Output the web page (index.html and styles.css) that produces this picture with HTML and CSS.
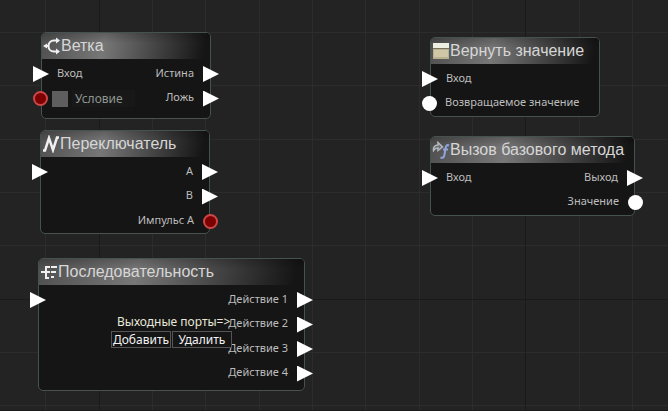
FILE: index.html
```html
<!DOCTYPE html>
<html lang="ru">
<head>
<meta charset="utf-8">
<title>Граф</title>
<link rel="stylesheet" href="styles.css">
</head>
<body>
<main class="canvas">
  <article class="node node-branch">
    <header class="head">
      <svg class="icon" viewBox="0 0 18 18"><path class="line" d="M2 9h3M14 3.500h-3C7.500 3.500 5.500 6 5.500 9s2 5.500 5.500 5.500h3"/><path class="solid" d="M13 .500l4 3-4 3zM13 11.500l4 3-4 3zM0 9l4-2.500v5z"/></svg>
      <h2>Ветка</h2>
    </header>
    <div class="body">
      <div class="ports">
        <div class="port"><i class="exec"></i><span>Вход</span></div>
        <div class="port port-field"><i class="data red"></i><input type="checkbox" id="condition"><label for="condition">Условие</label></div>
      </div>
      <div class="ports out">
        <div class="port"><span>Истина</span><i class="exec"></i></div>
        <div class="port"><span>Ложь</span><i class="exec"></i></div>
      </div>
    </div>
  </article>

  <article class="node node-switch">
    <header class="head">
      <svg class="icon" viewBox="0 0 18 18"><path class="bold" d="M1 15.500h2L7 3l4 12 4-12.500h2"/></svg>
      <h2>Переключатель</h2>
    </header>
    <div class="body">
      <div class="ports">
        <div class="port"><i class="exec"></i></div>
      </div>
      <div class="ports out">
        <div class="port"><span>A</span><i class="exec"></i></div>
        <div class="port"><span>B</span><i class="exec"></i></div>
        <div class="port"><span>Импульс A</span><i class="data red"></i></div>
      </div>
    </div>
  </article>

  <article class="node node-sequence">
    <header class="head">
      <svg class="icon" viewBox="0 0 18 18"><path class="line" d="M1 9h9M11 9h5M6 3v12h3M6 4h4M11 4h6M11 14h3"/></svg>
      <h2>Последовательность</h2>
    </header>
    <div class="body">
      <div class="ports">
        <div class="port"><i class="exec"></i></div>
      </div>
      <div class="ports out">
        <div class="port"><span>Действие 1</span><i class="exec"></i></div>
        <div class="port"><span>Действие 2</span><i class="exec"></i></div>
        <div class="port"><span>Действие 3</span><i class="exec"></i></div>
        <div class="port"><span>Действие 4</span><i class="exec"></i></div>
      </div>
    </div>
    <div class="tools">
      <p>Выходные порты=&gt;</p>
      <div class="buttons"><button type="button">Добавить</button><button type="button">Удалить</button></div>
    </div>
  </article>

  <article class="node node-return">
    <header class="head">
      <svg class="icon" viewBox="0 0 18 18"><path fill="#b9b08f" d="M1 1h16v16H1z"/><path fill="#eceee2" d="M1 1h16v5H1z"/><path fill="#77715c" d="M1 6h16v1H1z"/><path fill="#cfc7a6" d="M2 8h14v7H2z"/></svg>
      <h2>Вернуть значение</h2>
    </header>
    <div class="body">
      <div class="ports">
        <div class="port"><i class="exec"></i><span>Вход</span></div>
        <div class="port"><i class="data"></i><span>Возвращаемое значение</span></div>
      </div>
    </div>
  </article>

  <article class="node node-base">
    <header class="head">
      <svg class="icon" viewBox="0 0 18 18"><path fill="#6c7076" stroke="#b4b8be" stroke-width="1.500" d="M1.500 9.500C1 6 3 4 6 4V1.500L10.500 6 6 9.500V7C4 7 2.500 8 1.500 9.500z"/><path fill="none" stroke="#8fa5dc" stroke-width="2" d="M17 4.500c-2-1-3 0-3.500 3l-1 6c-.500 3-1.500 4-4 3M11 8.500h5"/></svg>
      <h2>Вызов базового метода</h2>
    </header>
    <div class="body">
      <div class="ports">
        <div class="port"><i class="exec"></i><span>Вход</span></div>
      </div>
      <div class="ports out">
        <div class="port"><span>Выход</span><i class="exec"></i></div>
        <div class="port"><span>Значение</span><i class="data"></i></div>
      </div>
    </div>
  </article>
</main>
</body>
</html>
```
FILE: styles.css
```css
* {
  box-sizing: border-box;
}

body {
  margin: 0;
  background: #232323;
  color: #bdbdbd;
  font: 11px/16px "Noto Sans", sans-serif;
}

h2,
p {
  margin: 0;
}

/* Fine grid lines repeat three to a tile; dark ones mark every eighth cell. */
.canvas {
  position: relative;
  min-height: 100vh;
  overflow: hidden;
  border-bottom: 1px solid #1e1a1b;
  background:
    linear-gradient(90deg, #1a1a1a 1px, transparent 1px) 99px 0 / 426px 100%,
    linear-gradient(#1a1a1a 1px, transparent 1px) 0 299px / 100% 426px,
    linear-gradient(90deg, #2c2c2c 1px, transparent 1px 54px, #2c2c2c 54px 55px, transparent 55px 107px, #2c2c2c 107px 108px, transparent 108px) 45px 0 / 160px 100%,
    linear-gradient(#2c2c2c 1px, transparent 1px 53px, #2c2c2c 53px 54px, transparent 54px 107px, #2c2c2c 107px 108px, transparent 108px) 0 32px / 100% 160px;
}

.node {
  position: absolute;
  border: 1px solid #46524f;
  border-radius: 5px;
  background: #151515;
}

.node-branch {
  left: 41px;
  top: 32px;
  width: 170px;
  padding-bottom: 7px;
}

.node-switch {
  left: 40px;
  top: 130px;
  width: 170px;
}

.node-sequence {
  left: 38px;
  top: 258px;
  width: 267px;
  padding-bottom: 4px;
}

.node-return {
  left: 430px;
  top: 37px;
  width: 170px;
}

.node-base {
  left: 430px;
  top: 136px;
  width: 205px;
}

.head {
  display: flex;
  align-items: center;
  height: 26px;
  padding-left: 1px;
  border-radius: 4px 4px 0 0;
  background:
    linear-gradient(rgba(0, 0, 0, 0.2), transparent 40%),
    linear-gradient(100deg, #505050, #777 37%, #484848 65%, #151515 96%);
}

.head h2 {
  color: #d6d6d6;
  font: 16px/20px "Liberation Sans", Arial, sans-serif;
  white-space: nowrap;
}

.icon {
  flex: none;
  width: 18px;
  height: 18px;
}

.line,
.bold {
  fill: none;
  stroke: #f0f0f0;
  stroke-width: 2;
}

.bold {
  stroke-width: 2.5;
}

.solid {
  fill: #f0f0f0;
}

.body {
  display: flex;
  justify-content: space-between;
  margin: 0 -9px;
  padding-top: 3px;
}

.ports {
  display: grid;
  grid-auto-rows: 24px 25px;
}

.out {
  justify-items: end;
}

.port {
  display: flex;
  align-items: center;
  gap: 8px;
  white-space: nowrap;
}

.out .port {
  gap: 9px;
}

.port span {
  padding-bottom: 3px;
}

.exec {
  width: 16px;
  height: 16px;
  background: #fff;
  clip-path: polygon(0 0, 100% 50%, 0 100%);
}

.data {
  width: 15px;
  height: 15px;
  border-radius: 50%;
  background: #fff;
}

.red {
  border: 2px solid #cc4648;
  background: #7d0000;
}

.port-field {
  gap: 4px;
}

.port-field input {
  appearance: none;
  width: 16px;
  height: 16px;
  margin: 0;
  background: #5e5e5e;
}

.port-field label {
  padding: 1px 12px 0 3px;
  background: #181818;
  color: #8f9692;
  font: 12px/16px "Noto Sans", sans-serif;
}

.tools {
  position: absolute;
  left: 72px;
  top: 55px;
  color: #e8e8d8;
  font: 12px/16px "Noto Sans", sans-serif;
}

.tools p {
  padding-left: 6px;
}

.buttons {
  display: flex;
  gap: 1px;
  padding-top: 1px;
}

.buttons button {
  height: 17px;
  min-width: 60px;
  padding: 0;
  border: 1px solid #555;
  background: #151515;
  color: #f2f2f2;
  font: inherit;
}
```
